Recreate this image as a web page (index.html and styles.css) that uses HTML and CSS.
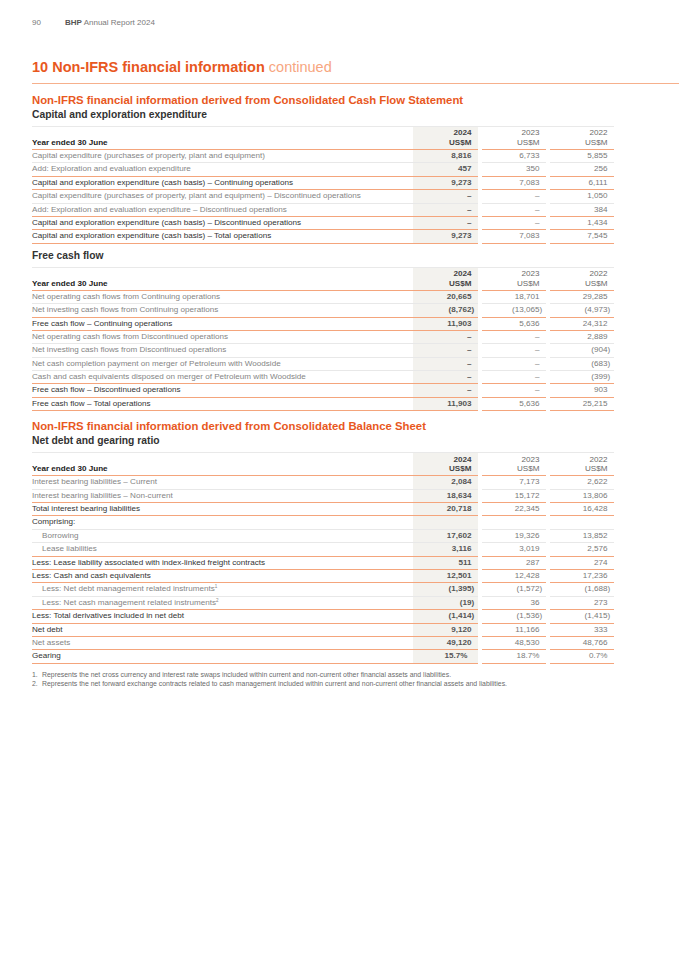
FILE: index.html
```html
<!DOCTYPE html>
<html lang="en">
<head>
<meta charset="utf-8">
<title>BHP Annual Report 2024 – Non-IFRS financial information</title>
<link rel="stylesheet" href="styles.css">
</head>
<body>
<div class="page">
  <div class="runhead"><span class="pg">90</span><span><b>BHP</b> Annual Report 2024</span></div>
  <h1 class="title">10 Non-IFRS financial information <span class="cont">continued</span></h1>

  <h2 class="sec">Non-IFRS financial information derived from Consolidated Cash Flow Statement</h2>
  <h3 class="sub first">Capital and exploration expenditure</h3>
  <div class="tbl">
    <div class="row hd"><div class="lab">Year ended 30 June</div><div class="v c24"><span>2024</span><span>US$M</span></div><div class="v"><span>2023</span><span>US$M</span></div><div class="v"><span>2022</span><span>US$M</span></div></div>
    <div class="row"><div class="lab">Capital expenditure (purchases of property, plant and equipment)</div><div class="v c24">8,816</div><div class="v">6,733</div><div class="v">5,855</div></div>
    <div class="row o"><div class="lab">Add: Exploration and evaluation expenditure</div><div class="v c24">457</div><div class="v">350</div><div class="v">256</div></div>
    <div class="row o t"><div class="lab">Capital and exploration expenditure (cash basis) – Continuing operations</div><div class="v c24">9,273</div><div class="v">7,083</div><div class="v">6,111</div></div>
    <div class="row"><div class="lab">Capital expenditure (purchases of property, plant and equipment) – Discontinued operations</div><div class="v c24">–</div><div class="v">–</div><div class="v">1,050</div></div>
    <div class="row o"><div class="lab">Add: Exploration and evaluation expenditure – Discontinued operations</div><div class="v c24">–</div><div class="v">–</div><div class="v">384</div></div>
    <div class="row o t"><div class="lab">Capital and exploration expenditure (cash basis) – Discontinued operations</div><div class="v c24">–</div><div class="v">–</div><div class="v">1,434</div></div>
    <div class="row o t"><div class="lab">Capital and exploration expenditure (cash basis) – Total operations</div><div class="v c24">9,273</div><div class="v">7,083</div><div class="v">7,545</div></div>
  </div>

  <h3 class="sub after">Free cash flow</h3>
  <div class="tbl">
    <div class="row hd"><div class="lab">Year ended 30 June</div><div class="v c24"><span>2024</span><span>US$M</span></div><div class="v"><span>2023</span><span>US$M</span></div><div class="v"><span>2022</span><span>US$M</span></div></div>
    <div class="row"><div class="lab">Net operating cash flows from Continuing operations</div><div class="v c24">20,665</div><div class="v">18,701</div><div class="v">29,285</div></div>
    <div class="row o"><div class="lab">Net investing cash flows from Continuing operations</div><div class="v c24">(8,762<span class="cp">)</span></div><div class="v">(13,065<span class="cp">)</span></div><div class="v">(4,973<span class="cp">)</span></div></div>
    <div class="row o t"><div class="lab">Free cash flow – Continuing operations</div><div class="v c24">11,903</div><div class="v">5,636</div><div class="v">24,312</div></div>
    <div class="row"><div class="lab">Net operating cash flows from Discontinued operations</div><div class="v c24">–</div><div class="v">–</div><div class="v">2,889</div></div>
    <div class="row"><div class="lab">Net investing cash flows from Discontinued operations</div><div class="v c24">–</div><div class="v">–</div><div class="v">(904<span class="cp">)</span></div></div>
    <div class="row"><div class="lab">Net cash completion payment on merger of Petroleum with Woodside</div><div class="v c24">–</div><div class="v">–</div><div class="v">(683<span class="cp">)</span></div></div>
    <div class="row o"><div class="lab">Cash and cash equivalents disposed on merger of Petroleum with Woodside</div><div class="v c24">–</div><div class="v">–</div><div class="v">(399<span class="cp">)</span></div></div>
    <div class="row o t"><div class="lab">Free cash flow – Discontinued operations</div><div class="v c24">–</div><div class="v">–</div><div class="v">903</div></div>
    <div class="row o t"><div class="lab">Free cash flow – Total operations</div><div class="v c24">11,903</div><div class="v">5,636</div><div class="v">25,215</div></div>
  </div>

  <h2 class="sec next">Non-IFRS financial information derived from Consolidated Balance Sheet</h2>
  <h3 class="sub first">Net debt and gearing ratio</h3>
  <div class="tbl">
    <div class="row hd"><div class="lab">Year ended 30 June</div><div class="v c24"><span>2024</span><span>US$M</span></div><div class="v"><span>2023</span><span>US$M</span></div><div class="v"><span>2022</span><span>US$M</span></div></div>
    <div class="row"><div class="lab">Interest bearing liabilities – Current</div><div class="v c24">2,084</div><div class="v">7,173</div><div class="v">2,622</div></div>
    <div class="row o"><div class="lab">Interest bearing liabilities – Non-current</div><div class="v c24">18,634</div><div class="v">15,172</div><div class="v">13,806</div></div>
    <div class="row o t"><div class="lab">Total interest bearing liabilities</div><div class="v c24">20,718</div><div class="v">22,345</div><div class="v">16,428</div></div>
    <div class="row t"><div class="lab">Comprising:</div><div class="v c24"></div><div class="v"></div><div class="v"></div></div>
    <div class="row"><div class="lab ind">Borrowing</div><div class="v c24">17,602</div><div class="v">19,326</div><div class="v">13,852</div></div>
    <div class="row o"><div class="lab ind">Lease liabilities</div><div class="v c24">3,116</div><div class="v">3,019</div><div class="v">2,576</div></div>
    <div class="row o t"><div class="lab">Less: Lease liability associated with index-linked freight contracts</div><div class="v c24">511</div><div class="v">287</div><div class="v">274</div></div>
    <div class="row o t"><div class="lab">Less: Cash and cash equivalents</div><div class="v c24">12,501</div><div class="v">12,428</div><div class="v">17,236</div></div>
    <div class="row"><div class="lab ind">Less: Net debt management related instruments<sup>1</sup></div><div class="v c24">(1,395<span class="cp">)</span></div><div class="v">(1,572<span class="cp">)</span></div><div class="v">(1,688<span class="cp">)</span></div></div>
    <div class="row o"><div class="lab ind">Less: Net cash management related instruments<sup>2</sup></div><div class="v c24">(19<span class="cp">)</span></div><div class="v">36</div><div class="v">273</div></div>
    <div class="row o t"><div class="lab">Less: Total derivatives included in net debt</div><div class="v c24">(1,414<span class="cp">)</span></div><div class="v">(1,536<span class="cp">)</span></div><div class="v">(1,415<span class="cp">)</span></div></div>
    <div class="row o t"><div class="lab">Net debt</div><div class="v c24">9,120</div><div class="v">11,166</div><div class="v">333</div></div>
    <div class="row o"><div class="lab">Net assets</div><div class="v c24">49,120</div><div class="v">48,530</div><div class="v">48,766</div></div>
    <div class="row o t"><div class="lab">Gearing</div><div class="v c24 pct">15.7%</div><div class="v">18.7%</div><div class="v">0.7%</div></div>
  </div>

  <ol class="notes">
    <li><span class="n">1.</span><span>Represents the net cross currency and interest rate swaps included within current and non-current other financial assets and liabilities.</span></li>
    <li><span class="n">2.</span><span>Represents the net forward exchange contracts related to cash management included within current and non-current other financial assets and liabilities.</span></li>
  </ol>
</div>
</body>
</html>
```

FILE: styles.css
```css
* { box-sizing: border-box; margin: 0; padding: 0; }

body {
  margin: 0;
  background: #ffffff;
  font-family: "Liberation Sans", Arial, sans-serif;
  color: #333;
}

.page {
  width: 679px;
  padding-top: 18px;
}

.runhead {
  margin-left: 32px;
  display: flex;
  font-size: 8px;
  line-height: 10px;
  color: #7a7a7a;
}
.runhead .pg { width: 33px; }
.runhead b { color: #555; font-weight: bold; }

.title {
  margin-top: 30px;
  margin-left: 32px;
  font-size: 14.5px;
  line-height: 18px;
  font-weight: bold;
  color: #e8581e;
  padding-bottom: 7px;
  border-bottom: 1px solid #f6b08c;
}
.title .cont { font-weight: normal; color: #f7a67f; }

.sec {
  margin-left: 32px;
  margin-top: 9px;
  font-size: 11.35px;
  line-height: 14px;
  font-weight: bold;
  color: #e8581e;
}
.sec.next { margin-top: 8px; }

.sub {
  margin-left: 32px;
  width: 582px;
  font-size: 10.3px;
  line-height: 14px;
  font-weight: bold;
  color: #333;
  padding-bottom: 4px;
  border-bottom: 1px solid #e9e9e9;
}
.sub.first { margin-top: 1px; }
.sub.after { margin-top: 5px; }

.tbl {
  margin-left: 32px;
  width: 582px;
  font-size: 8.1px;
}

.row {
  display: grid;
  grid-template-columns: 381px 65px 68px 68px;
}
.row > div {
  height: 13.4px;
  line-height: 12.4px;
  border-bottom: 1px solid #e8e8e8;
  white-space: nowrap;
}
.row > div:nth-child(n+3) { margin-left: 4px; }
.row.o > div { border-bottom-color: #f4a57c; }

.lab { color: #858585; }
.row.t .lab { color: #333; }
.lab.ind { padding-left: 10px; }
.lab sup { font-size: 4.5px; vertical-align: 3px; line-height: 0; }

.v {
  text-align: right;
  padding-right: 6.5px;
  color: #7a7a7a;
}
.c24 {
  background: #f3f2ee;
  font-weight: bold;
  color: #555;
}
.cp { margin-right: -0.333em; }
.pct { padding-right: 10.5px; }

.row.hd > div {
  height: 23px;
  line-height: 9.6px;
  padding-bottom: 1.5px;
  display: flex;
  flex-direction: column;
  justify-content: flex-end;
  border-bottom-color: #f4a57c;
}
.row.hd > .v { align-items: flex-end; color: #6a6a6a; }
.row.hd > .c24 { color: #444; }
.row.hd > .lab { font-weight: bold; color: #222; }

.notes {
  list-style: none;
  margin-left: 32px;
  margin-top: 6px;
  font-size: 6.9px;
  line-height: 9.7px;
  color: #6a6a6a;
}
.notes li { display: flex; }
.notes .n { width: 10px; flex: none; }
```
